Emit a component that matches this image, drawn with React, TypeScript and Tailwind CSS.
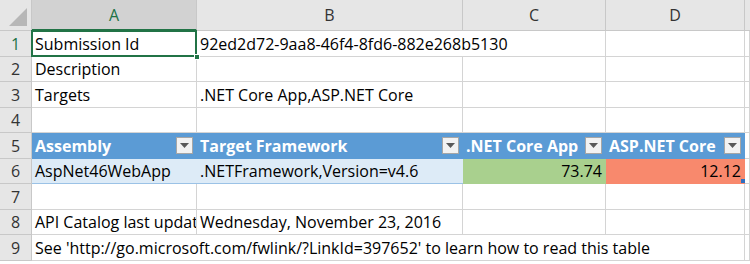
import React from "react";

const cols = "grid grid-cols-[32px_165px_266px_143px_139px_1fr]";
const line = "border-[#d4d4d4]";

function Dropdown() {
  return (
    <span className="absolute right-[4px] top-[4px] flex h-[17px] w-[17px] items-center justify-center border border-[#a6a6a6] bg-[#f2f2f2]">
      <svg width="9" height="5" viewBox="0 0 9 5">
        <path d="M0 0 L9 0 L4.5 5 Z" fill="#595959" />
      </svg>
    </span>
  );
}

function RowHead({ n, active }: { n: number; active?: boolean }) {
  return (
    <div
      className={`flex items-center justify-center border-r border-b border-[#c8c8c8] bg-[#e6e6e6] ${
        active ? "text-[#217346]" : "text-[#333]"
      }`}
    >
      {n}
    </div>
  );
}

function Cell({ children, className = "" }: { children?: React.ReactNode; className?: string }) {
  return (
    <div className={`flex items-center overflow-hidden whitespace-nowrap border-r border-b ${line} pl-[3px] ${className}`}>
      {children}
    </div>
  );
}

export default function App() {
  return (
    <div
      className="h-[264px] w-[750px] overflow-hidden bg-white text-[16px] text-black"
      style={{ fontFamily: '"Open Sans", "Liberation Sans", sans-serif' }}
    >
      {/* column headers */}
      <div className={`${cols} h-[31px] text-[#333]`}>
        <div className="relative border-r border-b border-[#c8c8c8] bg-[#e6e6e6]">
          <svg className="absolute bottom-[4px] right-[4px]" width="18" height="18" viewBox="0 0 18 18">
            <path d="M18 0 L18 18 L0 18 Z" fill="#b7b7b7" />
          </svg>
        </div>
        <div className="flex items-center justify-center border-r border-b-2 border-r-[#c8c8c8] border-b-[#217346] bg-[#d2d2d2] text-[#217346]">
          A
        </div>
        {["B", "C", "D"].map((c) => (
          <div key={c} className="flex items-center justify-center border-r border-b border-[#c8c8c8] bg-[#e6e6e6]">
            {c}
          </div>
        ))}
        <div className="border-b border-[#c8c8c8] bg-[#e6e6e6]" />
      </div>

      {/* row 1 */}
      <div className={`${cols} h-[26px]`}>
        <RowHead n={1} active />
        <div className="relative">
          <Cell className="h-full">Submission Id</Cell>
          <div className="absolute -left-[1px] -top-[1px] h-[27px] w-[166px] border-2 border-[#217346]" />
          <div className="absolute -right-[3px] -bottom-[3px] h-[6px] w-[6px] border border-white bg-[#217346]" />
        </div>
        <Cell className="col-span-2 overflow-visible">92ed2d72-9aa8-46f4-8fd6-882e268b5130</Cell>
        <Cell />
        <Cell />
      </div>

      {/* row 2 */}
      <div className={`${cols} h-[25px]`}>
        <RowHead n={2} />
        <Cell>Description</Cell>
        <Cell />
        <Cell />
        <Cell />
        <Cell />
      </div>

      {/* row 3 */}
      <div className={`${cols} h-[26px]`}>
        <RowHead n={3} />
        <Cell>Targets</Cell>
        <Cell>.NET Core App,ASP.NET Core</Cell>
        <Cell />
        <Cell />
        <Cell />
      </div>

      {/* row 4 */}
      <div className={`${cols} h-[25px]`}>
        <RowHead n={4} />
        <Cell />
        <Cell />
        <Cell />
        <Cell />
        <Cell />
      </div>

      {/* row 5: table header */}
      <div className={`${cols} h-[26px]`}>
        <RowHead n={5} />
        {["Assembly", "Target Framework", ".NET Core App", "ASP.NET Core"].map((h) => (
          <div
            key={h}
            className="relative flex items-center whitespace-nowrap border-b border-[#5b9bd5] bg-[#5b9bd5] pl-[3px] font-bold text-white"
          >
            {h}
            <Dropdown />
          </div>
        ))}
        <Cell />
      </div>

      {/* row 6 */}
      <div className={`${cols} h-[25px]`}>
        <RowHead n={6} />
        <div className="flex items-center whitespace-nowrap border-b border-[#9bc2e6] bg-[#ddebf7] pl-[3px]">AspNet46WebApp</div>
        <div className="flex items-center whitespace-nowrap border-b border-[#9bc2e6] bg-[#ddebf7] pl-[3px]">
          .NETFramework,Version=v4.6
        </div>
        <div className="flex items-center justify-end border-b border-[#a9d08e] bg-[#a9d08e] pr-[4px]">73.74</div>
        <div className="relative flex items-center justify-end border-b border-[#f8896d] bg-[#f8896d] pr-[4px]">
          12.12
          <span className="absolute bottom-0 right-0 h-[4px] w-[4px] bg-[#2f6fc0]" />
        </div>
        <Cell />
      </div>

      {/* row 7 */}
      <div className={`${cols} h-[26px]`}>
        <RowHead n={7} />
        <Cell />
        <Cell />
        <Cell />
        <Cell />
        <Cell />
      </div>

      {/* row 8 */}
      <div className={`${cols} h-[25px]`}>
        <RowHead n={8} />
        <Cell>API Catalog last updated</Cell>
        <Cell>Wednesday, November 23, 2016</Cell>
        <Cell />
        <Cell />
        <Cell />
      </div>

      {/* row 9 */}
      <div className={`${cols} h-[26px]`}>
        <RowHead n={9} />
        <Cell className="col-span-4 overflow-visible">
          See 'http://go.microsoft.com/fwlink/?LinkId=397652' to learn how to read this table
        </Cell>
        <Cell />
      </div>
    </div>
  );
}
